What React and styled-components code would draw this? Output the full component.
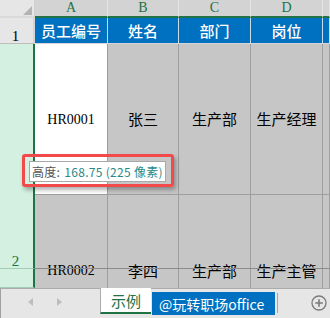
import React from "react";
import styled, { createGlobalStyle } from "styled-components";

const GlobalStyle = createGlobalStyle`
  html, body { margin: 0; padding: 0; background: #ffffff; }
  body { font-family: "Noto Sans CJK SC", "Liberation Sans", sans-serif; }
  * { box-sizing: border-box; }
`;

const GRID = "73px 71px 72px 72px 1fr";
const GREEN = "#217346";
const BLUE = "#0070c0";

const columns = ["A", "B", "C", "D", ""];

const rows = [
    { height: 151, cells: [
        { text: "HR0001", latin: true, kind: "active" },
        { text: "张三" },
        { text: "生产部" },
        { text: "生产经理" },
        { text: "" },
    ] },
    { height: 152, cells: [
        { text: "HR0002", latin: true },
        { text: "李四" },
        { text: "生产部" },
        { text: "生产主管" },
        { text: "" },
    ] },
];

const heads = ["员工编号", "姓名", "部门", "岗位", ""];

const App = () => {
    return (
        <>
            <GlobalStyle />
            <Window>
                <Sheet>
                    <HeaderRow>
                        <Corner />
                        {columns.map((c, i) => (
                            <ColHead key={i}>{c}</ColHead>
                        ))}
                    </HeaderRow>
                    <Body>
                        <RowHeads>
                            <RowHead $h={26}>1</RowHead>
                            <RowHead $h={225} $selected>2</RowHead>
                            <RowHead $selected $fill />
                        </RowHeads>
                        <Cells>
                            <DataRow $h={26}>
                                {heads.map((h, i) => (
                                    <Cell key={i} $h={26} $kind="head">{h}</Cell>
                                ))}
                            </DataRow>
                            {rows.map((r, ri) => (
                                <DataRow key={ri} $h={r.height}>
                                    {r.cells.map((c, ci) => (
                                        <Cell key={ci} $h={r.height} $kind={c.kind || "sel"} $latin={c.latin}>
                                            {c.text}
                                        </Cell>
                                    ))}
                                </DataRow>
                            ))}
                        </Cells>
                    </Body>
                    <ResizeLine />
                    <Callout>
                        <Tip>
                            <TipLabel>高度:</TipLabel>
                            <TipValue>168.75 (225 像素)</TipValue>
                        </Tip>
                    </Callout>
                </Sheet>
                <TabBar>
                    <Nav>
                        <Arrow $dir="left" />
                        <Arrow $dir="right" />
                    </Nav>
                    <ActiveTab>示例</ActiveTab>
                    <ColorTab>@玩转职场office</ColorTab>
                    <TabDivider />
                    <Spacer />
                    <AddSheet>
                        <svg width="16" height="16" viewBox="0 0 16 16">
                            <circle cx="8" cy="8" r="7" fill="none" stroke="#7a7a7a" strokeWidth="1.3" />
                            <path d="M8 4.2v7.6M4.2 8h7.6" stroke="#7a7a7a" strokeWidth="1.6" />
                        </svg>
                    </AddSheet>
                </TabBar>
            </Window>
        </>
    );
};

const Window = styled.div`
    width: 330px;
    height: 318px;
    overflow: hidden;
    display: flex;
    flex-direction: column;
    background: #ffffff;
`;

const Sheet = styled.div`
    height: 288px;
    flex-shrink: 0;
    position: relative;
    overflow: hidden;
`;

const HeaderRow = styled.div`
    display: grid;
    grid-template-columns: 35px ${GRID};
    height: 18px;
`;

const Corner = styled.div`
    position: relative;
    background: #e6e6e6;
    border-right: 1px solid #d0d0d0;
    border-bottom: 2px solid #dadada;
    &::after {
        content: "";
        position: absolute;
        right: 2px;
        bottom: 1px;
        border-style: solid;
        border-width: 0 0 9px 9px;
        border-color: transparent transparent #b4b4b4 transparent;
    }
`;

const ColHead = styled.div`
    background: #d3d3d3;
    color: ${GREEN};
    border-right: 1px solid #e4e4e4;
    border-bottom: 2px solid ${GREEN};
    font: 14px/16px "Liberation Serif", serif;
    text-align: center;
`;

const Body = styled.div`
    display: flex;
    align-items: flex-start;
`;

const RowHeads = styled.div`
    width: 35px;
    height: 270px;
    flex-shrink: 0;
    display: flex;
    flex-direction: column;
`;

const RowHead = styled.div`
    height: ${(p) => (p.$fill ? "auto" : `${p.$h}px`)};
    flex: ${(p) => (p.$fill ? 1 : "none")};
    display: flex;
    align-items: flex-end;
    justify-content: center;
    padding-right: 2px;
    padding-bottom: 1px;
    background: ${(p) => (p.$selected ? "#d3f0e0" : "#e6e6e6")};
    color: ${(p) => (p.$selected ? GREEN : "#000000")};
    border-right: 2px solid ${(p) => (p.$selected ? GREEN : "#d4d4d4")};
    border-bottom: 1px solid ${(p) => (p.$selected ? "#a3cdb5" : "#bdbdbd")};
    font: 15px/11px "Liberation Serif", serif;
`;

const Cells = styled.div`
    flex: 1;
    min-width: 0;
`;

const DataRow = styled.div`
    display: grid;
    grid-template-columns: ${GRID};
    height: ${(p) => p.$h}px;
`;

const cellBg = { head: BLUE, active: "#ffffff", sel: "#c6c6c6" };

const Cell = styled.div`
    height: ${(p) => p.$h}px;
    line-height: ${(p) => p.$h - 1 + (p.$latin ? 1 : 0)}px;
    text-align: center;
    white-space: nowrap;
    overflow: hidden;
    background: ${(p) => cellBg[p.$kind]};
    color: ${(p) => (p.$kind === "head" ? "#ffffff" : "#000000")};
    border-right: 1px solid ${(p) => (p.$kind === "head" ? "#c9dcea" : "#9e9e9e")};
    border-bottom: 1px solid ${(p) => (p.$kind === "head" ? "#d6d6d6" : "#9e9e9e")};
    font-family: ${(p) => (p.$latin ? `"Liberation Serif", serif` : `"Noto Sans CJK SC", sans-serif`)};
    font-size: ${(p) => (p.$latin ? "14px" : "15px")};
    font-weight: ${(p) => (p.$kind === "head" ? 500 : 400)};
`;

const ResizeLine = styled.div`
    position: absolute;
    left: 35px;
    right: 0;
    top: 268px;
    height: 1px;
    background: #8c8c8c;
`;

const Callout = styled.div`
    position: absolute;
    left: 22px;
    top: 154px;
    width: 152px;
    height: 33px;
    padding: 4px 5px 2px 4px;
    display: flex;
    border: 3px solid #f24a4a;
    border-radius: 3px;
    box-shadow: 2px 3px 4px rgba(0, 0, 0, 0.3);
`;

const Tip = styled.div`
    flex: 1;
    height: 21px;
    display: flex;
    align-items: center;
    gap: 4px;
    padding: 0 2px;
    background: #ffffff;
    border: 1px solid #a8a8a8;
    font-size: 12px;
    letter-spacing: 0.3px;
    white-space: nowrap;
    overflow: hidden;
`;

const TipLabel = styled.span`
    color: #555555;
`;

const TipValue = styled.span`
    color: #2a8985;
`;

const TabBar = styled.div`
    flex: 1;
    display: flex;
    align-items: flex-start;
    background: #e6e6e6;
    border-top: 1px solid #ababab;
    border-left: 1px solid #a0a0a0;
`;

const Nav = styled.div`
    width: 99px;
    height: 25px;
    display: flex;
    align-items: center;
    gap: 24px;
    padding-left: 27px;
`;

const Arrow = styled.span`
    width: 0;
    height: 0;
    border-top: 4px solid transparent;
    border-bottom: 4px solid transparent;
    ${(p) => (p.$dir === "left" ? "border-right: 5px solid #bdbdbd;" : "border-left: 5px solid #bdbdbd;")}
`;

const ActiveTab = styled.div`
    width: 51px;
    height: 26px;
    margin-top: -1px;
    display: flex;
    align-items: center;
    justify-content: center;
    background: #ffffff;
    color: ${GREEN};
    border-left: 1px solid #ababab;
    border-bottom: 2px solid ${GREEN};
    font-size: 15px;
`;

const ColorTab = styled.div`
    width: 123px;
    height: 23px;
    margin: 3px 0 0 1px;
    display: flex;
    align-items: center;
    padding-left: 7px;
    background: ${BLUE};
    color: #ffffff;
    font-size: 14px;
    white-space: nowrap;
`;

const TabDivider = styled.div`
    width: 1px;
    height: 20px;
    margin: 4px 0 0 2px;
    background: #a6a6a6;
`;

const Spacer = styled.div`
    flex: 1;
`;

const AddSheet = styled.div`
    width: 16px;
    height: 16px;
    margin: 6px 3px 0 0;
    display: flex;
`;

export default App;
